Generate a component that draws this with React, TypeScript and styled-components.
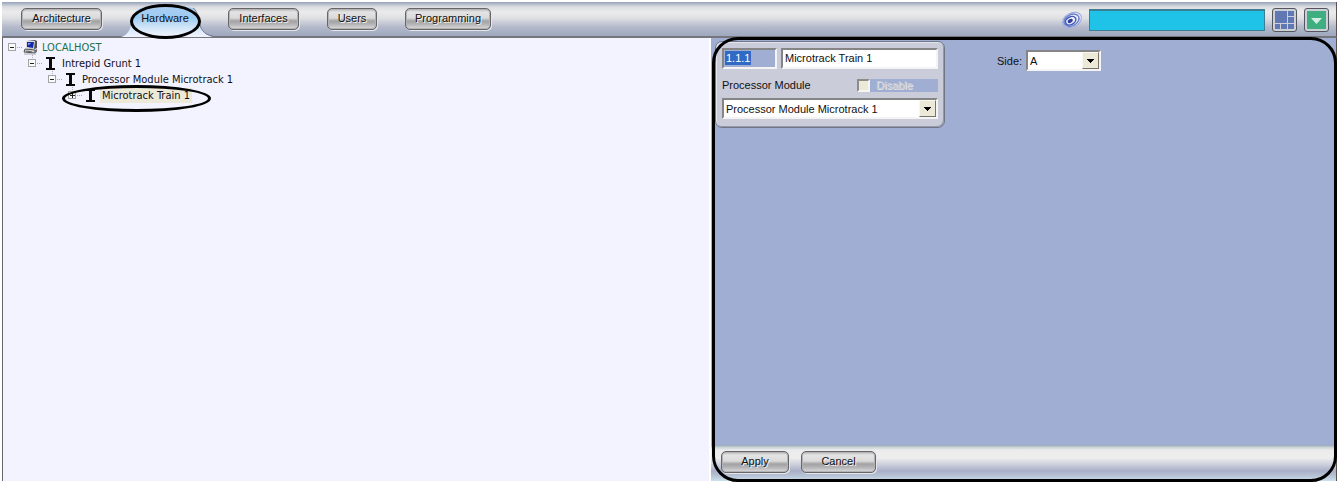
import React from "react";
import styled, { createGlobalStyle } from "styled-components";

const GlobalStyle = createGlobalStyle`
  * { box-sizing: border-box; }
  body { margin: 0; background: #ffffff; }
  body, button, input, select {
    font-family: "Liberation Sans", Arial, sans-serif;
    font-size: 11px;
    color: #101010;
  }
`;

const Page = styled.div`
  display: flex;
  flex-direction: column;
  min-height: 100vh;
  padding: 2px 2px 3px;
`;

const Toolbar = styled.header`
  display: flex;
  align-items: flex-start;
  justify-content: space-between;
  height: 36px;
  padding: 6px 7px 0 19px;
  border-right: 1px solid #5c5350;
  border-bottom: 2px solid #74767c;
  background: linear-gradient(#94a2b8 0, #b4bcca 2px, #dcdee2 5px, #ebebeb 10px, #e0e0e4 16px, #b4bacb 25px, #a0a9c0 33px);
`;

const Tabs = styled.nav`
  display: flex;
  align-items: flex-start;
`;

const PushButton = styled.button<{ $width: number; $gap?: number }>`
  width: ${(p) => p.$width}px;
  height: 22px;
  margin: 0 ${(p) => p.$gap ?? 0}px 0 0;
  padding: 0 0 2px;
  border: 1px solid #666668;
  border-radius: 5px;
  background: linear-gradient(#b4b4b6 0, #e4e4e4 3px, #dadada 9px, #a2a2a4 12px, #b2b2b4 15px, #dcdcde 20px);
  box-shadow: 1px 1px 0 #e4e6ec, inset 0 0 0 1px #b4b4b6;
  text-shadow: 1px 1px 0 #f4f4f4;
`;

const ActiveTab = styled.button`
  position: relative;
  width: 96px;
  height: 30px;
  margin: -1px 11px 0 19px;
  padding: 0 8px 8px 0;
  border: 0;
  background: none;
`;

const TabShape = styled.svg`
  position: absolute;
  inset: 0;
`;

const TabLabel = styled.span`
  position: relative;
`;

const Ring = styled.span<{ $top: number; $left: number; $width: number; $height: number }>`
  position: absolute;
  top: ${(p) => p.$top}px;
  left: ${(p) => p.$left}px;
  width: ${(p) => p.$width}px;
  height: ${(p) => p.$height}px;
  border: 3px solid #000000;
  border-radius: 50%;
  pointer-events: none;
`;

const Tools = styled.div`
  display: flex;
  align-items: center;
  height: 24px;
`;

const StatusField = styled.input`
  width: 176px;
  height: 22px;
  margin: 0 7px 0 6px;
  padding: 0 4px;
  border: 1px solid #3d7f92;
  border-top-width: 2px;
  background: #20c3e8;
`;

const IconButton = styled.button<{ $gap: number }>`
  display: flex;
  align-items: center;
  justify-content: center;
  width: 25px;
  height: 24px;
  margin: 0 ${(p) => p.$gap}px 0 0;
  padding: 0;
  border: 1px solid #52565e;
  border-radius: 3px;
  background: #cdd0d6;
`;

const Body = styled.main`
  display: grid;
  flex: 1;
  grid-template-columns: 709fr 626fr;
`;

const TreePane = styled.section`
  padding: 1px 0 0 5px;
  border-left: 1px solid #65656a;
  border-right: 2px solid #ffffff;
  background: #f3f3ff;
`;

const Tree = styled.ul`
  margin: 0;
  padding: 0;
  list-style: none;
`;

const Node = styled.li<{ $level: number }>`
  position: relative;
  display: flex;
  align-items: center;
  height: 16px;
  padding-left: ${(p) => p.$level * 20}px;
  font-family: "DejaVu Sans Condensed", "DejaVu Sans", sans-serif;
  font-size: 11px;
  white-space: nowrap;
`;

const NodeText = styled.span<{ $tone?: "host" | "selected" }>`
  margin-left: 2px;
  padding: 0 2px;
  line-height: 15px;
  color: ${(p) => (p.$tone === "host" ? "#207048" : "#101018")};
  background: ${(p) => (p.$tone === "selected" ? "#ece9d8" : "transparent")};
`;

const DetailPane = styled.section`
  position: relative;
  display: flex;
  flex-direction: column;
  border-right: 1px solid #5c5350;
  background: #a0aed4;
`;

const Outline = styled.div`
  position: absolute;
  inset: -1px -1px -1px 1px;
  border: 3px solid #000000;
  border-radius: 26px;
  pointer-events: none;
`;

const Form = styled.form`
  display: flex;
  flex: 1;
  align-items: flex-start;
  padding: 3px 0 0 4px;
`;

const Card = styled.div`
  display: flex;
  flex-direction: column;
  width: 230px;
  height: 87px;
  padding: 6px;
  border: 1px solid #707686;
  border-radius: 7px;
  background: #cbccda;
  box-shadow: inset 1px 1px 0 #e4e6ee, inset -1px -1px 0 #9498a8;
`;

const Row = styled.div`
  display: flex;
  align-items: center;
  justify-content: space-between;
`;

const TextInput = styled.input<{ $width: number; $address?: boolean }>`
  width: ${(p) => p.$width}px;
  height: 21px;
  padding: 0 2px 1px;
  border: 2px solid;
  border-color: #858585 #f4f4f4 #f4f4f4 #858585;
  color: ${(p) => (p.$address ? "#ffffff" : "#101010")};
  background: ${(p) =>
    p.$address ? "linear-gradient(#316ac5, #316ac5) 1px 1px / 26px 14px no-repeat #a0aed4" : "#ffffff"};
`;

const ModuleRow = styled(Row)`
  height: 29px;
  padding-top: 3px;
`;

const DisableLabel = styled.label`
  display: flex;
  align-items: center;
  width: 81px;
  height: 13px;
  color: #c9cbd2;
  background: #a0aed4;
  text-shadow: 1px 1px 0 #e6e6e6;
`;

const CheckBox = styled.input`
  appearance: none;
  width: 13px;
  height: 13px;
  margin: 0 6px 0 0;
  border: 2px solid;
  border-color: #8c8c88 #f6f6f0 #f6f6f0 #8c8c88;
  background: #ece9d8;
`;

const SelectWrap = styled.div<{ $width: number }>`
  position: relative;
  width: ${(p) => p.$width}px;
  height: 21px;
`;

const SelectBox = styled.select`
  appearance: none;
  display: block;
  width: 100%;
  height: 100%;
  padding: 0 20px 0 2px;
  border: 2px solid;
  border-color: #858585 #f4f4f4 #f4f4f4 #858585;
  border-radius: 0;
  background: #ffffff;
`;

const ArrowFace = styled.span`
  position: absolute;
  top: 2px;
  right: 2px;
  display: flex;
  align-items: center;
  justify-content: center;
  width: 17px;
  height: 17px;
  border: 1px solid;
  border-color: #f8f8f0 #77756a #77756a #f8f8f0;
  background: #ece9d8;
  pointer-events: none;
`;

const SideField = styled.div`
  display: flex;
  align-items: center;
  gap: 4px;
  margin: 9px 0 0 52px;
`;

const ActionBar = styled.footer`
  display: flex;
  height: 36px;
  padding: 6px 10px;
  background: linear-gradient(#95a6b4 0, #c4d0d4 2px, #ececec 5px, #eeeeee 13px, #cfd1dc 19px, #a9afc8 26px, #b8c4d6 31px, #c9e0ec 36px);
`;

function Arrow() {
  return (
    <ArrowFace aria-hidden="true">
      <svg width="7" height="4" shapeRendering="crispEdges">
        <path d="M0 0h7v1H6v1H5v1H4v1H3V3H2V2H1V1H0z" fill="#000" />
      </svg>
    </ArrowFace>
  );
}

function Expander({ open, root }: { open: boolean; root: boolean }) {
  return (
    <svg width="15" height="16" shapeRendering="crispEdges" aria-hidden="true">
      {!root && <path d="M4.500 0v4" stroke="#b0b0b4" strokeDasharray="1 1" />}
      <rect x="0.5" y="4.5" width="7" height="7" fill="#fafafa" stroke="#a4a4a4" />
      <path d={open ? "M2 8h4v1H2z" : "M2 8h5v1H2zM4 6h1v5H4z"} fill="#222" />
      <path d="M9 8.500h6" stroke="#a8a8a8" strokeDasharray="1 1" />
    </svg>
  );
}

function BeamIcon() {
  return (
    <svg width="15" height="16" aria-hidden="true">
      <path d="M3 2h9v2H9v9h3v2H3v-2h3V4H3z" fill="#0a0a0a" />
    </svg>
  );
}

function ComputerIcon() {
  return (
    <svg width="15" height="16" viewBox="0 0 15 16" aria-hidden="true">
      <path d="M4 2l8-1 2 1v7l-2 1-8-1z" fill="#505258" />
      <path d="M3 2h9l-1 8-8-1z" fill="#dcdcdc" />
      <path d="M4 3h7l-1 6-6-1z" fill="#1428a8" />
      <path d="M5 4h3l-2 2H5z" fill="#7c98f4" />
      <path d="M2 10l10 1v3L1 13z" fill="#d2d2ce" stroke="#505054" />
      <path d="M12 11l2-1v3l-2 1z" fill="#707074" />
      <path d="M3 12l6 1" stroke="#606064" />
      <path d="M1 15h12" stroke="#a8a8ac" />
    </svg>
  );
}

const nodes: { label: string; open: boolean; tone?: "host" | "selected" }[] = [
  { label: "LOCALHOST", open: true, tone: "host" },
  { label: "Intrepid Grunt 1", open: true },
  { label: "Processor Module Microtrack 1", open: true },
  { label: "Microtrack Train 1", open: false, tone: "selected" },
];

export default function App() {
  return (
    <>
      <GlobalStyle />
      <Page>
        <Toolbar>
          <Tabs>
            <PushButton $width={81}>Architecture</PushButton>
            <ActiveTab aria-current="page">
              <TabShape width="96" height="30" aria-hidden="true">
                <defs>
                  <linearGradient id="tab" x1="0" y1="0" x2="0" y2="1">
                    <stop offset="0" stopColor="#a9cdf0" />
                    <stop offset="0.35" stopColor="#9dccf2" />
                    <stop offset="0.7" stopColor="#d3e6f8" />
                    <stop offset="1" stopColor="#f3f3ff" />
                  </linearGradient>
                </defs>
                <path d="M0 30C8 28 10 20 12 11Q14 1 24 0H68Q76 1 77 11C79 21 82 28 92 30z" fill="url(#tab)" />
                <path d="M72 1Q76 3 77 11C79 21 82 28 92 29" fill="none" stroke="#707c94" />
              </TabShape>
              <TabLabel>Hardware</TabLabel>
              <Ring $top={-3} $left={9} $width={71} $height={35} />
            </ActiveTab>
            <PushButton $width={71} $gap={28}>Interfaces</PushButton>
            <PushButton $width={50} $gap={28}>Users</PushButton>
            <PushButton $width={86}>Programming</PushButton>
          </Tabs>
          <Tools>
            <svg width="22" height="20" viewBox="0 0 22 20" aria-hidden="true">
              <g transform="rotate(-28 11 10)" fill="none">
                <ellipse cx="11" cy="10" rx="10" ry="7" fill="#eceffa" stroke="#98a6da" />
                <ellipse cx="10.500" cy="10" rx="8" ry="5.500" stroke="#6c80cc" strokeWidth="1.500" />
                <ellipse cx="9.500" cy="10" rx="5.500" ry="3.800" stroke="#4458b4" strokeWidth="1.500" />
                <ellipse cx="9" cy="10" rx="2.800" ry="1.900" fill="#2c409c" />
              </g>
            </svg>
            <StatusField aria-label="Status" readOnly />
            <IconButton $gap={7} aria-label="Layout">
              <svg width="19" height="18" shapeRendering="crispEdges">
                <path d="M0 0h12v12H0zM13 0h6v5h-6zM13 6h6v6h-6zM0 13h5v5H0zM6 13h6v5H6zM13 13h6v5h-6z" fill="#6078b4" />
              </svg>
            </IconButton>
            <IconButton $gap={0} aria-label="Menu">
              <svg width="19" height="18">
                <path d="M0 0h19v18H0z" fill="#3fae80" />
                <path d="M4 7h11l-5.500 6z" fill="#d5eee4" />
              </svg>
            </IconButton>
          </Tools>
        </Toolbar>
        <Body>
          <TreePane>
            <Tree>
              {nodes.map((n, i) => (
                <Node key={n.label} $level={i}>
                  <Expander open={n.open} root={i === 0} />
                  {i === 0 ? <ComputerIcon /> : <BeamIcon />}
                  <NodeText $tone={n.tone}>{n.label}</NodeText>
                  {n.tone === "selected" && <Ring $top={-2} $left={54} $width={149} $height={27} />}
                </Node>
              ))}
            </Tree>
          </TreePane>
          <DetailPane>
            <Form>
              <Card>
                <Row>
                  <TextInput $width={55} $address aria-label="Address" defaultValue="1.1.1" />
                  <TextInput $width={157} aria-label="Name" defaultValue="Microtrack Train 1" />
                </Row>
                <ModuleRow>
                  <label htmlFor="module">Processor Module</label>
                  <DisableLabel>
                    <CheckBox type="checkbox" disabled />
                    Disable
                  </DisableLabel>
                </ModuleRow>
                <SelectWrap $width={216}>
                  <SelectBox id="module">
                    <option>Processor Module Microtrack 1</option>
                  </SelectBox>
                  <Arrow />
                </SelectWrap>
              </Card>
              <SideField>
                <label htmlFor="side">Side:</label>
                <SelectWrap $width={75}>
                  <SelectBox id="side">
                    <option>A</option>
                  </SelectBox>
                  <Arrow />
                </SelectWrap>
              </SideField>
            </Form>
            <ActionBar>
              <PushButton $width={68} $gap={12}>Apply</PushButton>
              <PushButton $width={75}>Cancel</PushButton>
            </ActionBar>
            <Outline />
          </DetailPane>
        </Body>
      </Page>
    </>
  );
}
